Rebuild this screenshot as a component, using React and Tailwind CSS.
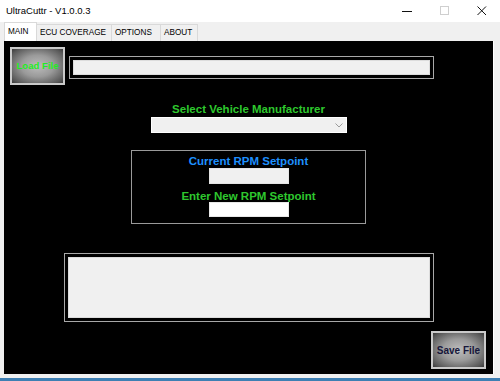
import React from 'react';

const btnBg = 'bg-[radial-gradient(ellipse_at_center,#bdbdbd_0%,#9a9a9a_45%,#5a5a5a_85%,#3a3a3a_100%)]';

function TitleBar() {
  return (
    <div className="h-[22px] bg-white flex items-center justify-between">
      <span className="pl-[6px] pt-[1px] text-[9.5px] text-black">UltraCuttr - V1.0.0.3</span>
      <div className="flex items-center h-full">
        <div className="w-[37px] h-full flex items-center justify-center">
          <svg width="11" height="11" viewBox="0 0 11 11"><path d="M0 5.5h10" stroke="#111" strokeWidth="1" /></svg>
        </div>
        <div className="w-[37px] h-full flex items-center justify-center">
          <svg width="10" height="10" viewBox="0 0 10 10"><rect x="0.5" y="0.5" width="8" height="8" fill="none" stroke="#cfcfcf" /></svg>
        </div>
        <div className="w-[37px] h-full flex items-center justify-center">
          <svg width="10" height="10" viewBox="0 0 10 10"><path d="M0.5 0.5l8.5 8.5M9 0.5L0.5 9" stroke="#111" strokeWidth="1" /></svg>
        </div>
      </div>
    </div>
  );
}

function Tabs() {
  const tabs = [
    { name: 'ECU COVERAGE', w: 'w-[75px]' },
    { name: 'OPTIONS', w: 'w-[49px]' },
    { name: 'ABOUT', w: 'w-[37px]' },
  ];
  return (
    <div className="h-[19px] flex items-end pl-[4px] bg-[#f0f0f0]">
      <div className="w-[33px] h-[19px] bg-white border-x border-t border-[#d9d9d9] flex items-center pl-[3px] text-[8.2px] text-black">MAIN</div>
      {tabs.map((t) => (
        <div key={t.name} className={`${t.w} h-[17px] bg-[#f0f0f0] border-r border-t border-[#d9d9d9] flex items-center pl-[3px] text-[8.2px] text-black`}>
          {t.name}
        </div>
      ))}
    </div>
  );
}

function FramedBox({ className }) {
  return (
    <div className={`border border-[#a8a8a8] bg-black p-[3px] ${className}`}>
      <div className="w-full h-full bg-[#f0f0f0] border border-[#dcdcdc]" />
    </div>
  );
}

export default function App() {
  return (
    <div className="w-[500px] h-[381px] bg-[#f0f0f0] overflow-hidden" style={{ fontFamily: '"Liberation Sans", Arial, sans-serif' }}>
      <TitleBar />
      <Tabs />
      <div className="ml-[4px] w-[490px] h-[333px] bg-black border-r border-white flex flex-col">
        <div className="flex items-start pl-[6px] pt-[6px]">
          <div className={`w-[55px] h-[38px] border-[2px] border-[#cacaca] ${btnBg} flex items-center justify-center`}>
            <span className="text-[9.6px] font-bold text-[#22ee22]">Load File</span>
          </div>
          <FramedBox className="ml-[4px] mt-[9px] w-[365px] h-[23px]" />
        </div>

        <div className="mt-[18px] text-center text-[11.5px] leading-[12px] font-bold text-[#2ec82e]">Select Vehicle Manufacturer</div>
        <div className="mt-[2px] self-center w-[196px] h-[16px] bg-[#f0f0f0] border border-white flex items-center justify-end pr-[3px]">
          <svg width="8" height="5" viewBox="0 0 8 5"><path d="M0.5 0.5L4 4l3.5-3.5" fill="none" stroke="#9a9a9a" strokeWidth="1" /></svg>
        </div>

        <div className="mt-[17px] self-center w-[235px] h-[74px] border border-[#9a9a9a] flex flex-col items-center pt-[4px]">
          <div className="text-[11.5px] leading-[12px] font-bold text-[#1e90ff]">Current RPM Setpoint</div>
          <div className="mt-[1px] w-[80px] h-[16px] bg-[#f0f0f0] border border-[#e4e4e4]" />
          <div className="mt-[6px] text-[11.5px] leading-[12px] font-bold text-[#2ec82e]">Enter New RPM Setpoint</div>
          <div className="w-[80px] h-[15px] bg-white border border-[#e8e8e8]" />
        </div>

        <FramedBox className="mt-[29px] self-center w-[370px] h-[69px]" />

        <div className={`mt-[9px] self-end mr-[7px] w-[55px] h-[38px] border-[2px] border-[#cacaca] ${btnBg} flex items-center justify-center`}>
          <span className="text-[10px] font-bold text-[#16163a]">Save File</span>
        </div>
      </div>
      <div className="h-[4px] bg-[#f0f0f0]" />
      <div className="h-[3px] bg-[#3e7fb3]" />
    </div>
  );
}
